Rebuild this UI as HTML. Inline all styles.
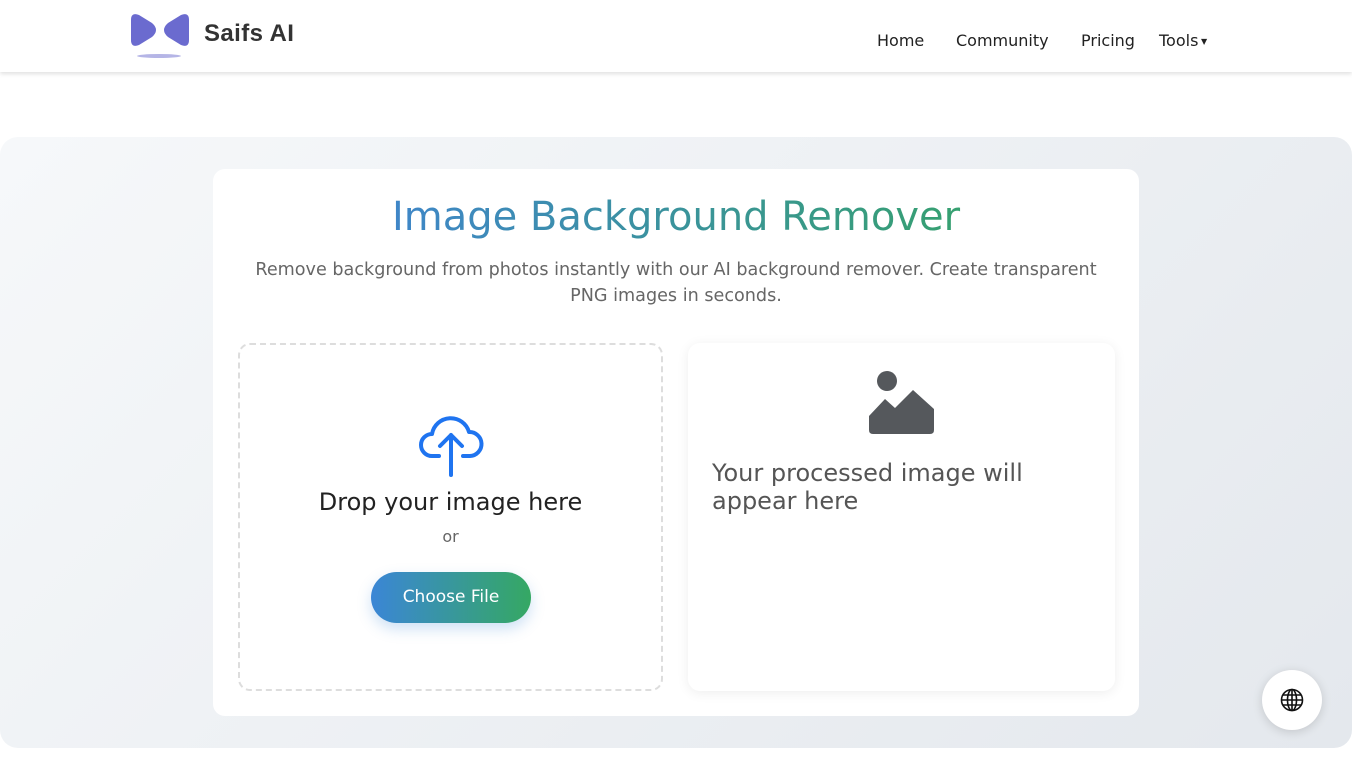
<!DOCTYPE html>
<html><head><meta charset="utf-8"><style>
*{box-sizing:border-box;margin:0;padding:0}
body{width:1352px;height:760px;overflow:hidden;background:#fff;font-family:"DejaVu Sans","Liberation Sans",sans-serif;position:relative}
.nav{position:absolute;top:0;left:0;width:1352px;height:72px;background:#fff;box-shadow:0 2px 4px rgba(0,0,0,.12);z-index:2}
.brand{position:absolute;left:204px;top:20px;font-family:"Liberation Sans",sans-serif;font-size:24px;font-weight:bold;color:#333;letter-spacing:.4px}
.links{position:absolute;top:31px;font-size:16px;color:#222}
.hero{position:absolute;left:0;top:137px;width:1352px;height:611px;border-radius:18px;background:linear-gradient(135deg,#f6f8fa,#e4e8ed)}
.card{position:absolute;left:213px;top:169px;width:926px;height:547px;background:#fff;border-radius:12px}
h1{position:absolute;left:178px;width:570px;top:25px;text-align:center;font-weight:normal;font-size:40px;background:linear-gradient(90deg,#3f86c8,#36a070);-webkit-background-clip:text;color:transparent}
.sub{position:absolute;left:20px;width:886px;top:88px;text-align:center;font-size:17.6px;line-height:26px;color:#666}
.drop{position:absolute;left:25px;top:174px;width:425px;height:348px;border:2px dashed #ddd;border-radius:12px;text-align:center}
.out{position:absolute;left:475px;top:174px;width:427px;height:348px;border-radius:12px;box-shadow:0 2px 12px rgba(0,0,0,.07);background:#fff}
.btn{position:absolute;left:131px;top:227px;width:160px;height:51px;border-radius:26px;background:linear-gradient(90deg,#3b86d6,#35a863);color:#fff;font-size:17px;line-height:51px;box-shadow:0 6px 14px rgba(59,134,214,.25)}
.globe{position:absolute;left:1262px;top:670px;width:60px;height:60px;border-radius:50%;background:#fff;box-shadow:0 2px 10px rgba(0,0,0,.15)}
</style></head><body>
<div class="nav">
<svg style="position:absolute;left:130px;top:12px" width="60" height="48" viewBox="0 0 60 48">
<path d="M1 8 Q1 0 9 3 L22 11 Q30 18 22 25 L9 33 Q1 36 1 28Z" fill="#6b6bcf"/>
<path d="M59 8 Q59 0 51 3 L38 11 Q30 18 38 25 L51 33 Q59 36 59 28Z" fill="#6b6bcf"/>
<ellipse cx="29" cy="44" rx="22" ry="2" fill="#b5b5e6"/>
</svg>
<div class="brand">Saifs AI</div>
<div class="links" style="left:877px">Home</div>
<div class="links" style="left:956px">Community</div>
<div class="links" style="left:1081px">Pricing</div>
<div class="links" style="left:1159px">Tools<span style="font-size:8px;vertical-align:2px"> ▼</span></div>
</div>
<div class="hero"></div>
<div class="card">
<h1>Image Background Remover</h1>
<div class="sub">Remove background from photos instantly with our AI background remover. Create transparent<br>PNG images in seconds.</div>
<div class="drop">
<svg style="position:absolute;left:178px;top:70px" width="66" height="62" viewBox="0 0 66 62" fill="none" stroke="#1f74f0" stroke-width="4" stroke-linecap="round" stroke-linejoin="round">
<path d="M21 41 H14 A11 11 0 0 1 14 19 A19 19 0 0 1 51 17 A12 12 0 0 1 52 41 H45"/>
<path d="M33 60 V20 M22 31 L33 20 L44 31"/>
</svg>
<div style="position:absolute;left:0;width:421px;top:143px;font-size:24px;color:#222">Drop your image here</div>
<div style="position:absolute;left:0;width:421px;top:182px;font-size:16px;color:#666">or</div>
<div class="btn">Choose File</div>
</div>
<div class="out">
<svg style="position:absolute;left:181px;top:27px" width="66" height="65" viewBox="0 0 66 65" fill="#55585c">
<circle cx="18" cy="11" r="10"/>
<path d="M0 46 L16 29 L26 38 L44 20 L65 39 V60 Q65 64 61 64 H4 Q0 64 0 60Z"/>
</svg>
<div style="position:absolute;left:24px;top:116px;font-size:24px;line-height:28px;color:#555">Your processed image will<br>appear here</div>
</div>
</div>
<div class="globe">
<svg style="position:absolute;left:18px;top:18px" width="24" height="24" viewBox="0 0 24 24" fill="none" stroke="#111" stroke-width="1.6">
<circle cx="12" cy="12" r="10.5"/><ellipse cx="12" cy="12" rx="4.5" ry="10.5"/><path d="M12 1.5V22.5M1.5 12H22.5M3 7H21M3 17H21"/>
</svg>
</div>
</body></html>
